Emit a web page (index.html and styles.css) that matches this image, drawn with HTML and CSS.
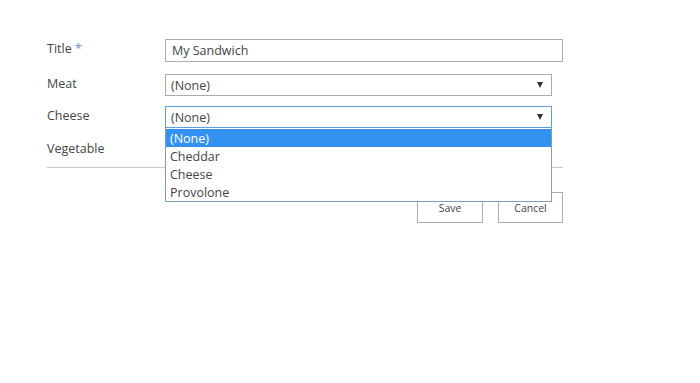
FILE: index.html
```html
<!DOCTYPE html>
<html>
<head>
<meta charset="utf-8">
<link rel="stylesheet" href="styles.css">
</head>
<body>
<div class="page">
  <div class="form">
    <div class="row row-title">
      <div class="label">Title <span class="req">*</span></div>
      <div class="field text-input">My Sandwich</div>
    </div>
    <div class="row row-meat">
      <div class="label">Meat</div>
      <div class="field select"><span>(None)</span><span class="arrow"></span></div>
    </div>
    <div class="row row-cheese">
      <div class="label">Cheese</div>
      <div class="select-wrap">
        <div class="field select focused"><span>(None)</span><span class="arrow"></span></div>
        <div class="listbox">
          <div class="option selected">(None)</div>
          <div class="option">Cheddar</div>
          <div class="option">Cheese</div>
          <div class="option">Provolone</div>
        </div>
      </div>
    </div>
    <div class="row row-veg">
      <div class="label">Vegetable</div>
    </div>
  </div>
  <div class="sep"></div>
  <div class="actions">
    <button class="btn">Save</button>
    <button class="btn">Cancel</button>
  </div>
</div>
</body>
</html>
```

FILE: styles.css
```css
html, body {
  margin: 0;
  padding: 0;
  background: #ffffff;
}
body {
  font-family: "Open Sans", "Noto Sans", "Liberation Sans", sans-serif;
  font-size: 12.5px;
  color: #444444;
}
.page {
  padding: 39px 0 0 47px;
  width: 516px;
}
.form {
  display: flex;
  flex-direction: column;
}
.row {
  display: flex;
  align-items: flex-start;
}
.row-title { height: 23px; margin-bottom: 12px; }
.row-meat { height: 22px; margin-bottom: 10px; }
.row-cheese { height: 22px; margin-bottom: 11px; }
.row-veg { height: 22px; }
.label {
  width: 118px;
  flex: none;
  line-height: 18px;
  padding-top: 1px;
  color: #444444;
}
.req {
  color: #6f8fc2;
}
.field {
  box-sizing: border-box;
  border: 1px solid #ababab;
  background: #fff;
  display: flex;
  align-items: center;
  color: #444444;
}
.text-input {
  width: 398px;
  height: 23px;
  padding-left: 6px;
}
.select {
  width: 387px;
  height: 22px;
  padding-left: 5px;
  padding-right: 8px;
  padding-top: 1px;
  justify-content: space-between;
}
.select.focused {
  border-color: #5d9ce0;
}
.arrow {
  width: 0;
  height: 0;
  border-left: 3.5px solid transparent;
  border-right: 3.5px solid transparent;
  border-top: 6px solid #333333;
  margin-top: -1px;
}
.select-wrap {
  position: relative;
}
.listbox {
  position: absolute;
  top: 22px;
  left: 0;
  width: 387px;
  box-sizing: border-box;
  border: 1px solid #7f9db9;
  border-top: none;
  background: #fff;
  z-index: 5;
  padding-top: 1px;
}
.option {
  height: 18px;
  line-height: 19px;
  padding-left: 4px;
  color: #444444;
}
.option.selected {
  background: #3391f2;
  color: #ffffff;
}
.sep {
  height: 1px;
  background: #c8c8c8;
  margin-top: 6px;
}
.actions {
  display: flex;
  justify-content: flex-end;
  gap: 15px;
  margin-top: 24px;
}
.btn {
  box-sizing: border-box;
  width: 66px;
  height: 31px;
  border: 1px solid #ababab;
  background: #fff;
  font-family: "Open Sans", "Noto Sans", "Liberation Sans", sans-serif;
  font-size: 10.5px;
  color: #444444;
  padding: 0;
  margin: 0;
}
.btn + .btn {
  width: 65px;
}
```
